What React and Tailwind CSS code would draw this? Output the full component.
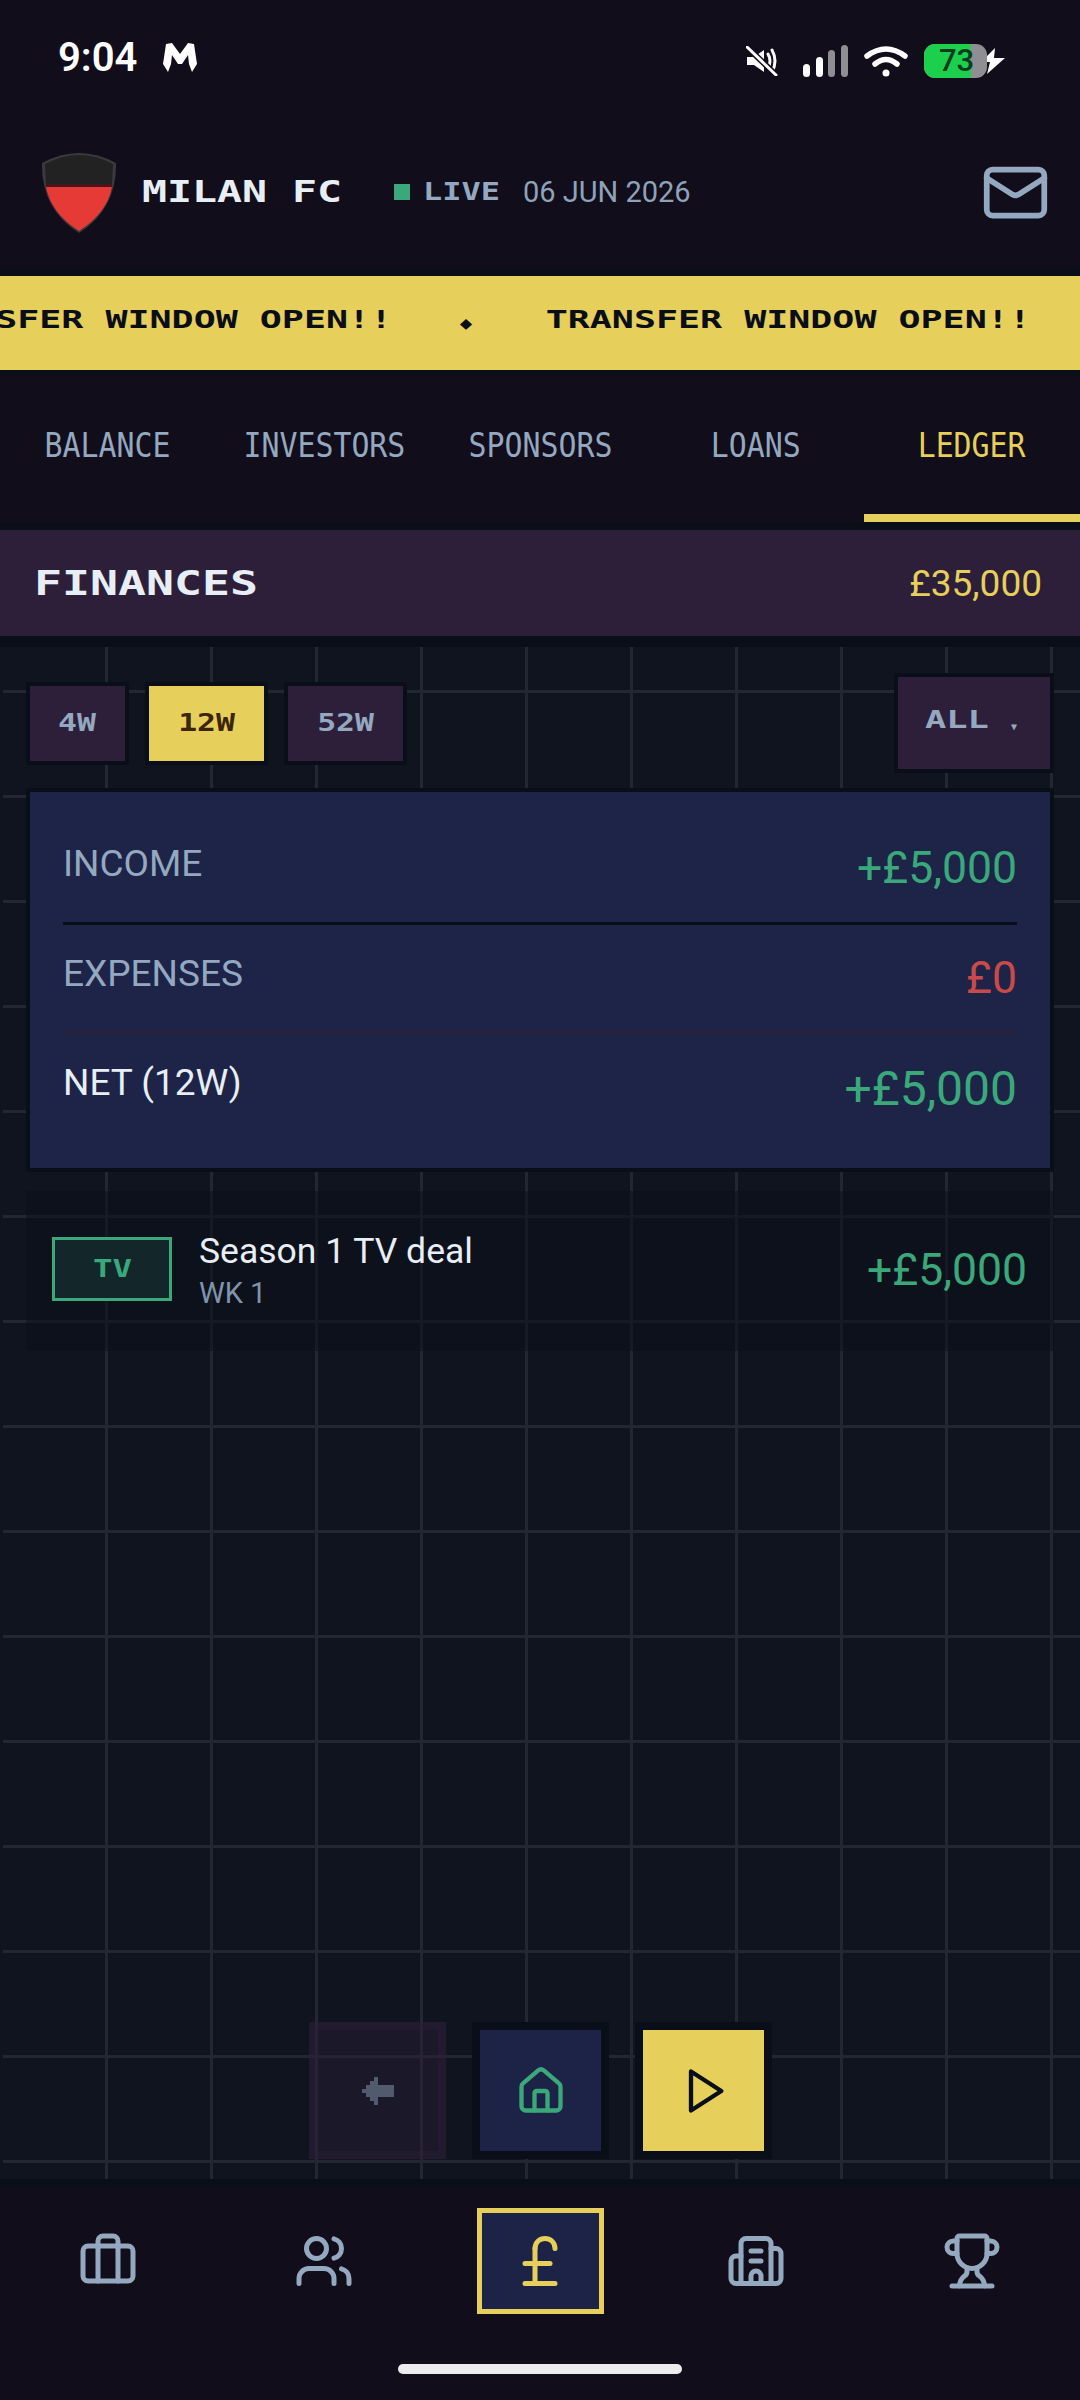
import { Briefcase, Building2, House, Mail, PoundSterling, Trophy, Users } from "lucide-react";

const TABS = ["BALANCE", "INVESTORS", "SPONSORS", "LOANS", "LEDGER"];

const NAV = [
  { icon: Briefcase },
  { icon: Users },
  { icon: PoundSterling, active: true },
  { icon: Building2 },
  { icon: Trophy },
];

/* -------------------- Status bar icons -------------------- */
const MLogo = () => (
  <svg width="34" height="30" viewBox="0 0 34 30" fill="#fff">
    <path d="M3 1 L9 0 L17 11 L25 0 L31 1 L34 21 L29 29 L26 21 L25 12 L19 21 L15 21 L9 12 L8 21 L5 29 L0 21 Z" />
  </svg>
);

const MuteIcon = () => (
  <svg width="32" height="30" viewBox="0 0 32 30" fill="none">
    <path d="M1 11 H8 L18 4 V26 L8 19 H1 Z" fill="#fff" />
    <path d="M22 8 Q26 15 22 22 M26 4 Q32 15 26 26" stroke="#fff" strokeWidth="3" strokeLinecap="round" />
    <path d="M1 1 L30 29" stroke="#110d1a" strokeWidth="6" />
    <path d="M1 1 L30 29" stroke="#fff" strokeWidth="3" strokeLinecap="round" />
  </svg>
);

const SignalIcon = () => (
  <svg width="45" height="32" viewBox="0 0 45 32">
    <rect x="0" y="19" width="7" height="13" rx="3.5" fill="#fff" />
    <rect x="13" y="12" width="7" height="20" rx="3.5" fill="#fff" />
    <rect x="25" y="5" width="7" height="27" rx="3.5" fill="#8e8e93" />
    <rect x="38" y="0" width="7" height="32" rx="3.5" fill="#8e8e93" />
  </svg>
);

const WifiIcon = () => (
  <svg width="44" height="32" viewBox="0 0 44 32" fill="none" stroke="#fff" strokeWidth="5.5" strokeLinecap="round">
    <path d="M3 11 Q22 -3 41 11" />
    <path d="M11 19 Q22 10 33 19" />
    <circle cx="22" cy="28" r="3.5" fill="#fff" stroke="none" />
  </svg>
);

const BoltIcon = () => (
  <svg width="24" height="26" viewBox="0 0 24 26" fill="#fff">
    <path d="M14 0 L0 14 H9 L6 26 L24 10 H13 Z" />
  </svg>
);

const Shield = () => (
  <svg width="76" height="82" viewBox="0 0 76 82">
    <path d="M1 12 Q38 -8 75 12 Q76 58 38 82 Q0 58 1 12 Z" fill="#3a3a3e" />
    <path d="M4 13 Q38 -5 72 13 L71 33 H5 Z" fill="#222222" />
    <path d="M5 33 H71 V36 H5 Z" fill="#4a1418" />
    <path d="M5 36 H71 Q66 62 38 80 Q10 62 5 36 Z" fill="#e63a37" />
  </svg>
);

const PlayIcon = () => (
  <svg width="52" height="52" viewBox="0 0 24 24" fill="none" stroke="#0a0e18" strokeWidth="2" strokeLinejoin="round">
    <polygon points="6 3 20 12 6 21 6 3" />
  </svg>
);

const PixelArrow = () => (
  <svg width="32" height="28" viewBox="0 0 32 28" fill="#525a6e">
    <path d="M12 0 H16 V8 H32 V20 H16 V28 H12 V24 H8 V20 H4 V16 H0 V12 H4 V8 H8 V4 H12 Z" />
  </svg>
);

export default function App() {
  // no pixel font installed, so a mono stretched sideways stands in for it
  const PIXEL = "font-['DejaVu_Sans_Mono',monospace]";

  return (
    <div className="flex h-[2400px] w-[1080px] flex-col overflow-hidden bg-[#110d1a] font-['Roboto',sans-serif] leading-[1.172]">
      {/* Status bar */}
      <div className="flex h-[84px] items-end justify-between pb-[6px] pl-[58px] pr-[75px]">
        <div className="flex items-center gap-[26px]">
          <span className="text-[40px] font-semibold leading-[40px] text-white">9:04</span>
          <MLogo />
        </div>
        <div className="flex items-center">
          <MuteIcon />
          <div className="ml-[25px]">
            <SignalIcon />
          </div>
          <div className="ml-[16px]">
            <WifiIcon />
          </div>
          <div className="relative ml-[16px] flex h-[34px] w-[63px] rounded-[11px] bg-[#8e8e93]">
            <div className="w-[47px] rounded-l-[11px] bg-[#1ccf4c]" />
            <span className="absolute left-[15px] top-0 text-[31px] font-medium leading-[34px] text-[#0a3d1e]">73</span>
          </div>
          <div className="-ml-[6px]">
            <BoltIcon />
          </div>
        </div>
      </div>

      {/* Club header */}
      <div className="flex h-[192px] items-center justify-between border-b-[8px] border-[#0a0e18] pl-[41px] pr-[30px] pt-[32px]">
        <div className="flex items-center">
          <Shield />
          <span className={`${PIXEL} ml-[25px] inline-block w-[200px] origin-left scale-x-[1.384] whitespace-nowrap text-[30px] font-bold leading-none text-[#e8eef5]`}>
            MILAN FC
          </span>
          <span className="ml-[52px] h-[16px] w-[16px] bg-[#3aa87a]" />
          <span className={`${PIXEL} ml-[13px] inline-block w-[77px] origin-left scale-x-[1.33] text-[24px] font-bold leading-none text-[#94a8c0]`}>
            LIVE
          </span>
          <span className="ml-[23px] text-[29px] leading-none text-[#8ea2ba]">06 JUN 2026</span>
        </div>
        <Mail size={69} color="#94a8c0" strokeWidth={2} />
      </div>

      {/* Ticker */}
      <div className="flex h-[99px] items-center overflow-hidden whitespace-nowrap border-b-[5px] border-[#0a0e18] bg-[#e6cf5b] pb-[6px]">
        <div className={`${PIXEL} -ml-[93px] flex shrink-0 origin-left scale-x-[1.465] items-center text-[25px] font-bold text-[#0a0e18]`}>
          <span>TRANSFER WINDOW OPEN!!</span>
          <span className="ml-[45px] mt-[10px] text-[18px]">♦</span>
          <span className="ml-[49px]">TRANSFER WINDOW OPEN!!</span>
        </div>
      </div>

      {/* Tabs */}
      <div className="grid h-[155px] grid-cols-5 border-b-[8px] border-[#0a0e18]">
        {TABS.map((tab) => (
          <div
            key={tab}
            className={`${PIXEL} border-b-[8px] pt-[51px] text-center leading-[39px] ${
              tab === "LEDGER" ? "border-[#e6cf5b] text-[#e6cf5b]" : "border-transparent text-[#94a8c0]"
            }`}
          >
            <span className="inline-block scale-x-[0.905] text-[33px]">{tab}</span>
          </div>
        ))}
      </div>

      {/* Finances title */}
      <div className="flex h-[117px] shrink-0 items-center justify-between border-b-[11px] border-[#0a0e18] bg-[#2d1f3a] pl-[34px] pr-[38px]">
        <span className={`${PIXEL} origin-left scale-x-[1.41] text-[33px] font-bold leading-none text-[#e8eef5]`}>FINANCES</span>
        <span className="text-[37px] leading-none text-[#e6cf5b]">£35,000</span>
      </div>

      {/* Main */}
      <div className="relative flex-1 border-l-[3px] border-[#10141f] bg-[#10141f] bg-[linear-gradient(to_right,#232733_3px,transparent_3px),linear-gradient(to_bottom,#232733_3px,transparent_3px)] bg-[size:105px_105px] bg-[position:102px_43px]">
        <div className="-ml-[3px] px-[26px] pt-[26px]">
          {/* Range filters */}
          <div className="flex h-[100px] items-center justify-between">
            <div className="flex gap-[16px]">
              <div className={`${PIXEL} flex h-[83px] w-[103px] items-center justify-center border-[4px] border-[#0a0e18] bg-[#2d1f3a] text-[25px] font-bold text-[#94a8c0]`}>
                <span className="inline-block scale-x-[1.26]">4W</span>
              </div>
              <div className={`${PIXEL} flex h-[83px] w-[123px] items-center justify-center border-[4px] border-[#0a0e18] bg-[#e6cf5b] text-[25px] font-bold text-[#3d2508]`}>
                <span className="inline-block scale-x-[1.26]">12W</span>
              </div>
              <div className={`${PIXEL} flex h-[83px] w-[123px] items-center justify-center border-[4px] border-[#0a0e18] bg-[#2d1f3a] text-[25px] font-bold text-[#94a8c0]`}>
                <span className="inline-block scale-x-[1.26]">52W</span>
              </div>
            </div>
            <div className={`${PIXEL} flex h-[100px] w-[160px] items-center border-[4px] border-[#0a0e18] bg-[#2d1f3a] pl-[27px] text-[25px] font-bold text-[#94a8c0]`}>
              <span className="inline-block w-[64px] origin-left scale-x-[1.415] -translate-y-[3px]">ALL</span>
              <span className="ml-[22px] mt-[8px] text-[10px]">▼</span>
            </div>
          </div>

          {/* Summary card */}
          <div className="mt-[15px] border-[4px] border-[#0a0e18] bg-[#1d2448] px-[33px] pb-[50px] pt-[22px]">
            <div className="flex items-start justify-between border-b-[3px] border-[#0a0e18] py-[28px]">
              <span className="text-[37px] text-[#94a8c0]">INCOME</span>
              <span className="text-[44.5px] text-[#3aa87a]">+£5,000</span>
            </div>
            <div className="flex items-start justify-between border-b-[3px] border-[#2d1f3a] py-[27px]">
              <span className="text-[37px] text-[#94a8c0]">EXPENSES</span>
              <span className="text-[44.5px] text-[#c94a4a]">£0</span>
            </div>
            <div className="flex items-start justify-between pt-[27px]">
              <span className="text-[37px] text-[#e8eef5]">NET (12W)</span>
              <span className="text-[48px] text-[#3aa87a]">+£5,000</span>
            </div>
          </div>

          {/* Ledger row */}
          <div className="mt-[19px] flex h-[160px] items-center justify-between bg-[#0a0e18]/50 pl-[26px] pr-[27px]">
            <div className="flex items-center">
              <div className={`${PIXEL} mb-[3px] flex h-[64px] w-[120px] items-center justify-center border-[3px] border-[#3aa87a] bg-[#13262a] text-[24px] font-bold text-[#3aa87a]`}>
                <span className="inline-block scale-x-[1.35]">TV</span>
              </div>
              <div className="ml-[27px]">
                <div className="text-[35.5px] leading-[40px] text-[#e8eef5]">Season 1 TV deal</div>
                <div className="mt-[6px] text-[29px] leading-[33px] text-[#8094ac]">WK 1</div>
              </div>
            </div>
            <span className="text-[44.5px] text-[#3aa87a]">+£5,000</span>
          </div>
        </div>

        {/* Floating controls */}
        <div className="absolute bottom-[20px] left-[306px] flex gap-[26px]">
          <div className="flex h-[137px] w-[137px] items-center justify-center border-[8px] border-[#2d1f3a]/40 bg-[#2d1f3a]/40">
            <PixelArrow />
          </div>
          <div className="flex h-[137px] w-[137px] items-center justify-center border-[8px] border-[#0a0e18] bg-[#1c2347]">
            <House size={52} color="#3aa87a" strokeWidth={2} />
          </div>
          <div className="flex h-[137px] w-[137px] items-center justify-center border-[8px] border-[#0a0e18] bg-[#e6cf5b]">
            <PlayIcon />
          </div>
        </div>
      </div>

      {/* Bottom nav */}
      <div className="relative h-[221px] shrink-0 border-t-[8px] border-[#0a0e18] pt-[21px]">
        <div className="grid grid-cols-5">
          {NAV.map(({ icon: Icon, active }, i) => (
            <div key={i} className="flex h-[106px] items-center justify-center">
              {active ? (
                <div className="flex h-[106px] w-[127px] items-center justify-center border-[5px] border-[#e6cf5b] bg-[#1c2347]">
                  <Icon size={60} color="#e6cf5b" strokeWidth={2} />
                </div>
              ) : (
                <Icon size={60} color="#94a8c0" strokeWidth={2} />
              )}
            </div>
          ))}
        </div>
        <div className="absolute bottom-[26px] left-[398px] h-[10px] w-[284px] rounded-full bg-[#ececec]" />
      </div>
    </div>
  );
}
